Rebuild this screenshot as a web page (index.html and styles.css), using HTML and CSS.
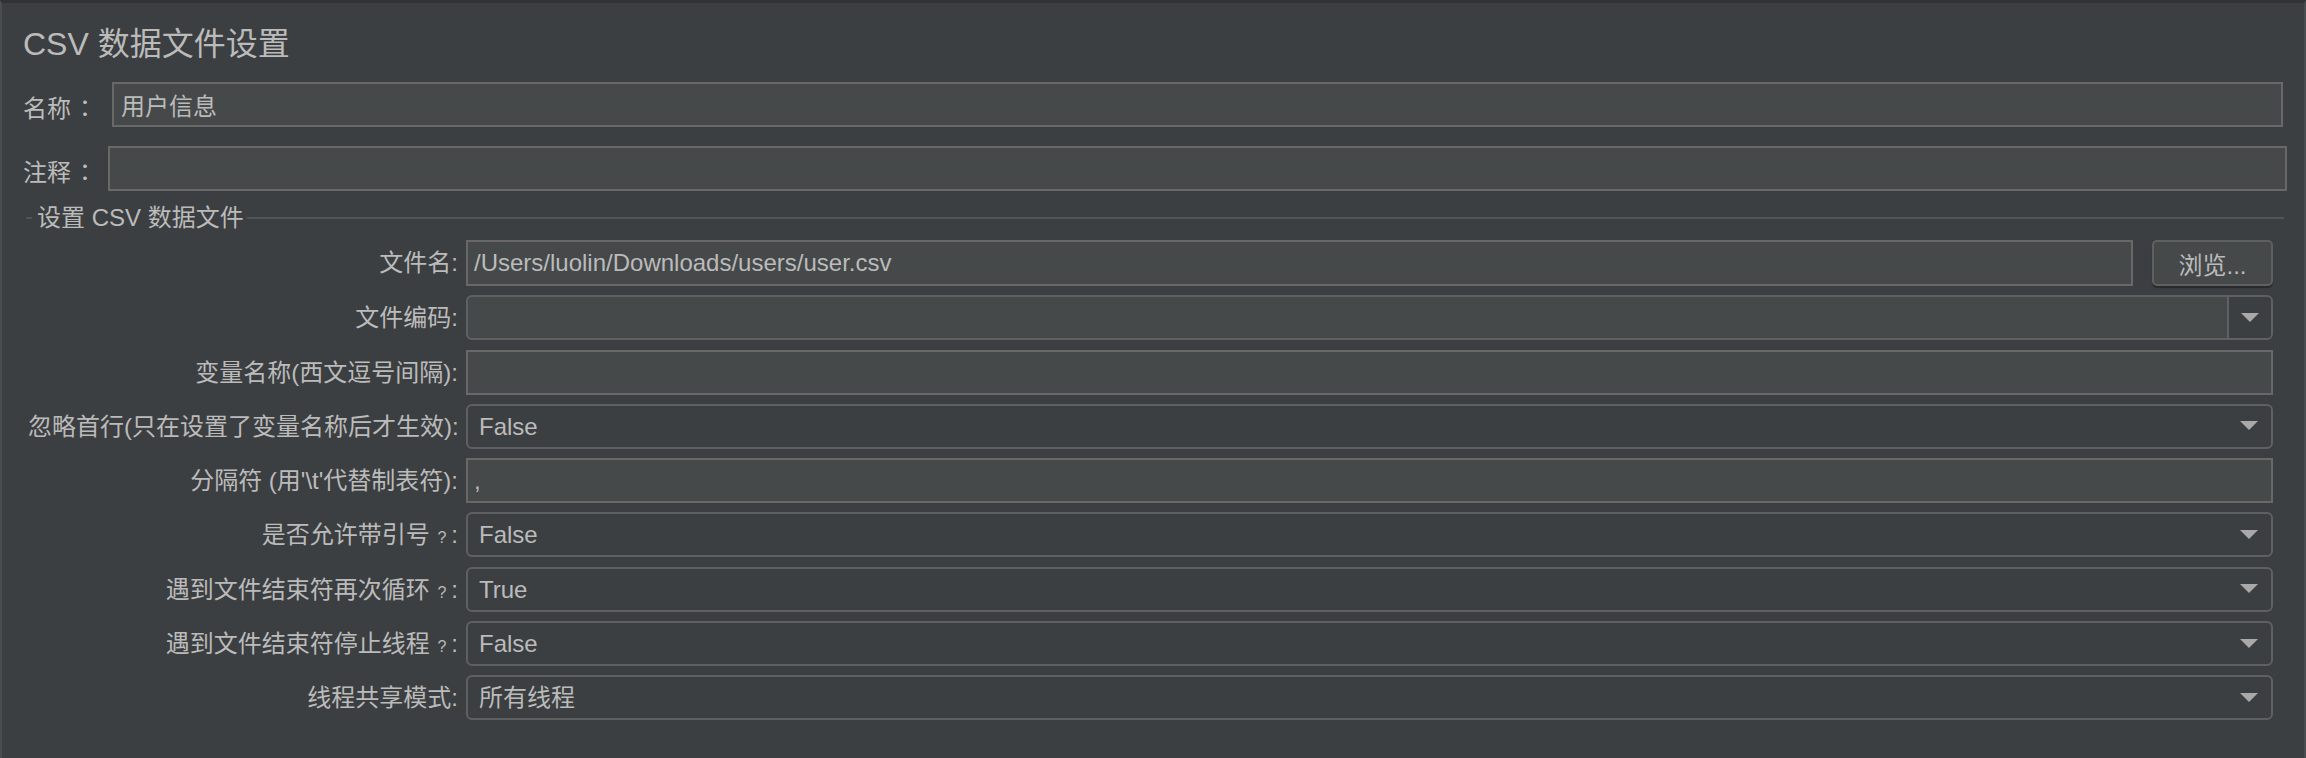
FILE: index.html
```html
<!DOCTYPE html>
<html lang="zh-CN">
<head>
<meta charset="utf-8">
<title>CSV 数据文件设置</title>
<link rel="stylesheet" href="styles.css">
</head>
<body>
<div class="panel">
  <h1 class="title">CSV 数据文件设置</h1>

  <div class="top-row name-row">
    <div class="top-label">名称<span class="fwc">：</span></div>
    <div class="field top-field">用户信息</div>
  </div>

  <div class="top-row comment-row">
    <div class="top-label">注释<span class="fwc">：</span></div>
    <div class="field top-field"></div>
  </div>

  <section class="group">
    <div class="legend">
      <span class="legend-lead"></span>
      <span class="legend-text">设置 CSV 数据文件</span>
      <span class="legend-line"></span>
    </div>

    <div class="form">
      <div class="lbl">文件名:</div>
      <div class="file-wrap">
        <div class="field">/Users/luolin/Downloads/users/user.csv</div>
        <button class="btn" type="button">浏览...</button>
      </div>

      <div class="lbl">文件编码:</div>
      <div class="combo editable">
        <div class="combo-value"></div>
        <div class="combo-arrow"><svg width="18" height="10" viewBox="0 0 18 10"><polygon points="0,0 18,0 9,9" fill="#a9a9a9"/></svg></div>
      </div>

      <div class="lbl">变量名称(西文逗号间隔):</div>
      <div class="field"></div>

      <div class="lbl">忽略首行(只在设置了变量名称后才生效):</div>
      <div class="combo">
        <div class="combo-value">False</div>
        <div class="combo-arrow"><svg width="18" height="10" viewBox="0 0 18 10"><polygon points="0,0 18,0 9,9" fill="#a9a9a9"/></svg></div>
      </div>

      <div class="lbl">分隔符 (用'\t'代替制表符):</div>
      <div class="field">,</div>

      <div class="lbl">是否允许带引号 <span class="q">?</span>:</div>
      <div class="combo">
        <div class="combo-value">False</div>
        <div class="combo-arrow"><svg width="18" height="10" viewBox="0 0 18 10"><polygon points="0,0 18,0 9,9" fill="#a9a9a9"/></svg></div>
      </div>

      <div class="lbl">遇到文件结束符再次循环 <span class="q">?</span>:</div>
      <div class="combo">
        <div class="combo-value">True</div>
        <div class="combo-arrow"><svg width="18" height="10" viewBox="0 0 18 10"><polygon points="0,0 18,0 9,9" fill="#a9a9a9"/></svg></div>
      </div>

      <div class="lbl">遇到文件结束符停止线程 <span class="q">?</span>:</div>
      <div class="combo">
        <div class="combo-value">False</div>
        <div class="combo-arrow"><svg width="18" height="10" viewBox="0 0 18 10"><polygon points="0,0 18,0 9,9" fill="#a9a9a9"/></svg></div>
      </div>

      <div class="lbl">线程共享模式:</div>
      <div class="combo">
        <div class="combo-value">所有线程</div>
        <div class="combo-arrow"><svg width="18" height="10" viewBox="0 0 18 10"><polygon points="0,0 18,0 9,9" fill="#a9a9a9"/></svg></div>
      </div>
    </div>
  </section>
</div>
</body>
</html>
```

FILE: styles.css
```css
* {
  box-sizing: border-box;
}

html,
body {
  margin: 0;
  padding: 0;
}

body {
  width: 2306px;
  height: 758px;
  overflow: hidden;
  background: #3c3f41;
  color: #bbbbbb;
  font-family: "Liberation Sans", "Noto Sans CJK SC", sans-serif;
  font-size: 24px;
}

.panel {
  height: 758px;
  border-top: 3px solid #303234;
  border-left: 2px solid #4a4d4f;
  border-right: 2px solid #4a4d4f;
  padding-top: 21px;
}

.title {
  margin: 0 0 0 21px;
  height: 40px;
  font-size: 32px;
  font-weight: normal;
  line-height: 40px;
  white-space: nowrap;
}

.top-row {
  display: flex;
  align-items: flex-start;
  height: 45px;
  padding-left: 21px;
}

.name-row {
  margin-top: 18px;
  padding-right: 21px;
  gap: 17px;
}

.comment-row {
  margin-top: 19px;
  padding-right: 17px;
  gap: 13px;
}

.top-label {
  flex: none;
  width: 72px;
  height: 45px;
  padding-top: 7px;
  line-height: 36px;
  white-space: nowrap;
}

.fwc {
  display: inline-block;
  width: 24px;
  padding-left: 2px;
  font-family: "Noto Sans CJK TC", sans-serif;
}

.field {
  height: 45px;
  border: 2px solid #686868;
  background: #45494a;
  padding: 0 6px;
  line-height: 41px;
  white-space: nowrap;
  overflow: hidden;
}

.top-field {
  flex: 1;
  padding: 5px 7px 0;
  line-height: 36px;
}

.legend {
  display: flex;
  align-items: center;
  height: 24px;
  margin: 15px 20px 0 24px;
  line-height: 24px;
  white-space: nowrap;
}

.legend-lead {
  width: 6px;
  height: 2px;
  background: #525456;
}

.legend-text {
  padding: 0 3px 0 5px;
}

.legend-line {
  flex: 1;
  height: 2px;
  background: #525456;
}

.form {
  display: grid;
  grid-template-columns: 430px 1fr;
  column-gap: 8px;
  row-gap: 9.3px;
  margin-top: 10px;
  padding-left: 26px;
  padding-right: 31px;
}

.lbl {
  height: 45px;
  text-align: right;
  line-height: 45px;
  white-space: nowrap;
}

.q {
  display: inline-block;
  font-size: 16px;
  margin: 0 5px 0 1px;
}

.file-wrap {
  display: flex;
  gap: 19px;
}

.file-wrap .field {
  flex: 1;
  height: 46px;
}

.btn {
  flex: none;
  width: 121px;
  height: 46px;
  padding: 0;
  border: 2px solid #5e6061;
  border-radius: 5px;
  background: #45494a;
  color: #bbbbbb;
  font: inherit;
  box-shadow: 0 2px 1px rgba(0, 0, 0, 0.35);
}

.combo {
  display: flex;
  height: 45px;
  border: 2px solid #5e6061;
  border-radius: 6px;
  background: #3c3f41;
  overflow: hidden;
}

.combo-value {
  flex: 1;
  padding-left: 11px;
  line-height: 41px;
  white-space: nowrap;
}

.combo-arrow {
  flex: none;
  width: 44px;
  display: flex;
  align-items: center;
  justify-content: center;
}

.combo.editable {
  background: #45494a;
}

.combo.editable .combo-arrow {
  background: #3c3f41;
  border-left: 2px solid #5e6061;
}
```
